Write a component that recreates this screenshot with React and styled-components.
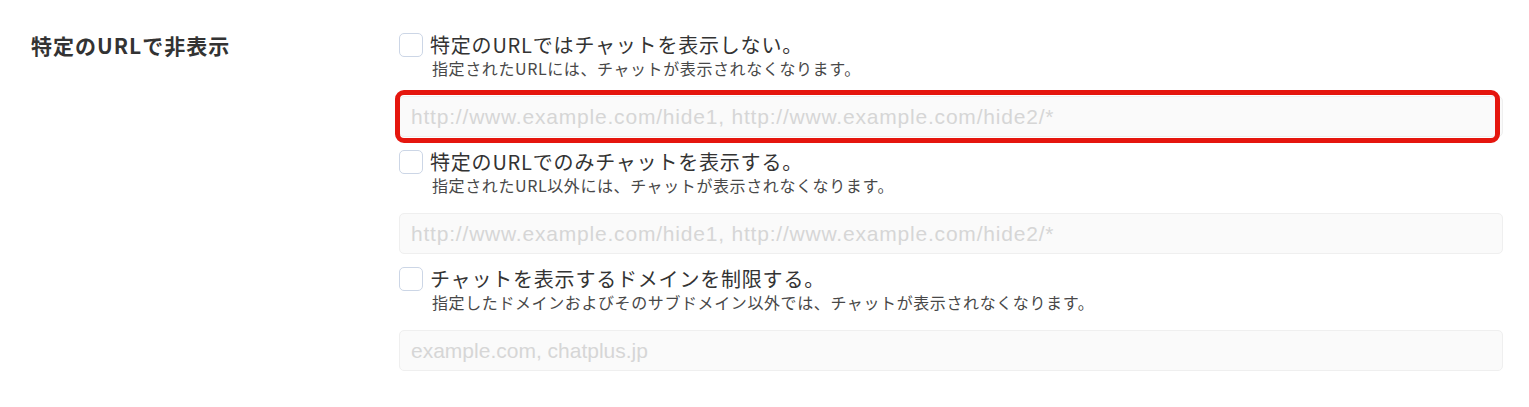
import React from "react";
import styled, { createGlobalStyle } from "styled-components";

const GlobalStyle = createGlobalStyle`
  html, body {
    margin: 0;
    padding: 0;
    background: #fff;
  }
  body {
    font-family: "Noto Sans CJK JP", "Noto Sans", sans-serif;
    color: #333;
  }
`;

const Section = styled.section`
  display: grid;
  grid-template-columns: 368px 1fr;
  padding: 33px 26px 0 31px;
  width: 1529px;
  box-sizing: border-box;
`;

const Heading = styled.h2`
  margin: 0;
  font-size: 21px;
  line-height: 24px;
  font-weight: 700;
  letter-spacing: 1px;
  color: #333;
`;

const Options = styled.div`
  display: flex;
  flex-direction: column;
  gap: 13px;
`;

const Option = styled.div`
  display: flex;
  flex-direction: column;
`;

const CheckRow = styled.label`
  display: flex;
  align-items: center;
  gap: 7px;
  height: 24px;
  cursor: pointer;
`;

const Checkbox = styled.input.attrs({ type: "checkbox" })`
  appearance: none;
  margin: 0;
  width: 24px;
  height: 24px;
  box-sizing: border-box;
  border: 1px solid #ccd6e6;
  border-radius: 5px;
  background: #fff;
  flex-shrink: 0;
`;

const LabelText = styled.span`
  font-size: 20px;
  line-height: 24px;
  letter-spacing: 0.04em;
  color: #333;
`;

const Desc = styled.p`
  margin: -1px 0 0 33px;
  font-size: 16px;
  line-height: 24px;
  letter-spacing: 0.6px;
  color: #484848;
`;

const FieldWrap = styled.div`
  position: relative;
  margin-top: 16px;

  ${({ $highlight }) =>
    $highlight &&
    `
    &::after {
      content: "";
      position: absolute;
      top: -6px;
      left: -4px;
      right: 3px;
      bottom: -6px;
      border: 5px solid #e5160e;
      border-radius: 9px;
      pointer-events: none;
    }
  `}
`;

const Field = styled.input`
  display: block;
  width: 100%;
  height: 41px;
  box-sizing: border-box;
  padding: 0 11px;
  border: 1px solid #efefef;
  border-radius: 5px;
  background: #fafafa;
  font-family: "Liberation Sans", Arial, sans-serif;
  font-size: 21px;
  letter-spacing: ${({ $spacing }) => $spacing || "0"};
  color: #333;
  outline: none;

  &::placeholder {
    color: #d6d6d6;
  }
`;

const URL_HINT = "http://www.example.com/hide1, http://www.example.com/hide2/*";

const options = [
  {
    id: "hide",
    label: "特定のURLではチャットを表示しない。",
    desc: "指定されたURLには、チャットが表示されなくなります。",
    placeholder: URL_HINT,
    spacing: "0.8px",
    highlight: true,
  },
  {
    id: "only",
    label: "特定のURLでのみチャットを表示する。",
    desc: "指定されたURL以外には、チャットが表示されなくなります。",
    placeholder: URL_HINT,
    spacing: "0.8px",
  },
  {
    id: "domain",
    label: "チャットを表示するドメインを制限する。",
    desc: "指定したドメインおよびそのサブドメイン以外では、チャットが表示されなくなります。",
    placeholder: "example.com, chatplus.jp",
  },
];

export default function App() {
  return (
    <>
      <GlobalStyle />
      <Section>
        <Heading>特定のURLで非表示</Heading>
        <Options>
          {options.map((o) => (
            <Option key={o.id}>
              <CheckRow>
                <Checkbox name={o.id} />
                <LabelText>{o.label}</LabelText>
              </CheckRow>
              <Desc>{o.desc}</Desc>
              <FieldWrap $highlight={o.highlight}>
                <Field type="text" placeholder={o.placeholder} $spacing={o.spacing} />
              </FieldWrap>
            </Option>
          ))}
        </Options>
      </Section>
    </>
  );
}
